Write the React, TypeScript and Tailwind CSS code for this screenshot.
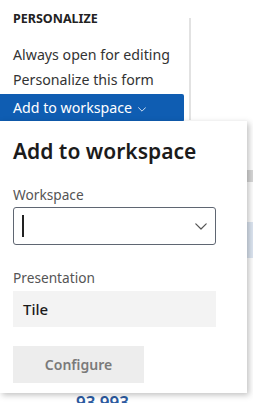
import React from 'react';

const font = { fontFamily: '"Noto Sans", "Open Sans", Arial, sans-serif' };

function Chevron({ className }: { className?: string }) {
  return (
    <svg viewBox="0 0 12 7" className={className} fill="none" stroke="currentColor" strokeWidth="1.2">
      <path d="M0.8 0.8 L6 6 L11.2 0.8" strokeLinecap="round" strokeLinejoin="round" />
    </svg>
  );
}

export default function App() {
  return (
    <div className="relative w-[253px] h-[403px] overflow-hidden bg-white" style={font}>
      {/* Personalize menu */}
      <div className="flex">
        <div className="w-[189px] pt-[12px]">
          <div className="px-[13px] text-[12.5px] font-bold text-[#222] leading-[14px]">PERSONALIZE</div>
          <div className="mt-[17px] px-[13px] text-[14.2px] text-[#333] leading-[24px]">Always open for editing</div>
          <div className="mt-[1px] px-[13px] text-[14.2px] text-[#333] leading-[24px]">Personalize this form</div>
          <div className="mt-[2px] w-[184px] h-[28px] rounded-r-[2px] bg-[#0f5db2] flex items-center gap-[6px] px-[13px] text-[14.2px] text-white">
            <span>Add to workspace</span>
            <Chevron className="w-[8px] h-[5px] mt-[2px]" />
          </div>
        </div>
        <div className="mt-[18px] w-[2px] h-[102px] bg-[#e2e2e2]" />
      </div>

      {/* page content behind the flyout */}
      <div className="absolute left-[247px] top-[170px] w-[10px] h-[12px] bg-[#d8d8d8]" />
      <div className="absolute left-[247px] top-[222px] w-[10px] h-[36px] bg-[#dde6f2]" />
      <div className="absolute left-[76px] top-[393px] text-[17px] font-semibold text-[#2c5aa0] leading-[20px]">93 993</div>

      {/* Flyout */}
      <div className="absolute left-0 top-[121px] w-[247px] h-[272px] bg-white shadow-[2px_2px_6px_rgba(0,0,0,0.25)] px-[13px] pt-[17px]">
        <div className="text-[21px] font-semibold text-[#1b1b1b] leading-[26px]">Add to workspace</div>
        <div className="mt-[22px] text-[13.7px] text-[#555] leading-[17px]">Workspace</div>
        <div className="mt-[4px] w-[203px] h-[38px] border-[1.5px] border-[#5f6672] rounded-[3px] flex items-center justify-between pl-[8px] pr-[8px]">
          <div className="w-[1.5px] h-[22px] bg-[#222]" />
          <Chevron className="w-[12px] h-[7px] text-[#555]" />
        </div>
        <div className="mt-[24px] text-[13.7px] text-[#555] leading-[17px]">Presentation</div>
        <div className="mt-[5px] w-[203px] h-[36px] bg-[#f3f3f3] flex items-center px-[10px] text-[15px] font-medium text-[#1b1b1b]">Tile</div>
        <div className="mt-[19px] w-[131px] h-[37px] bg-[#ededed] flex items-center justify-center text-[14px] font-semibold text-[#7a7a7a]">Configure</div>
      </div>
    </div>
  );
}
